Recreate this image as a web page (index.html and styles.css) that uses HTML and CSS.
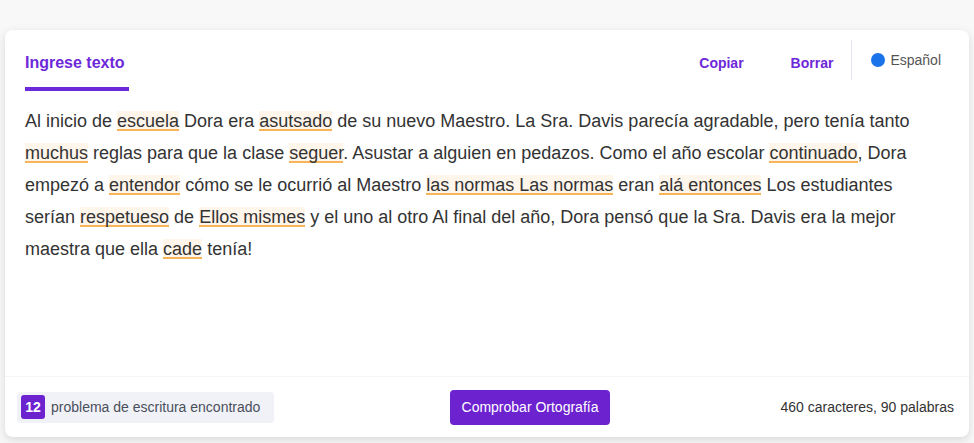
FILE: index.html
```html
<!DOCTYPE html>
<html lang="es">
<head>
<meta charset="utf-8">
<title>Corrector</title>
<link rel="stylesheet" href="styles.css">
</head>
<body>
<div class="card">
  <div class="header">
    <div class="tab">Ingrese texto</div>
    <div class="actions">
      <button class="link">Copiar</button>
      <button class="link">Borrar</button>
      <span class="divider"></span>
      <span class="lang"><span class="dot"></span>Español</span>
    </div>
  </div>
  <div class="text">Al inicio de <span class="err">escuela</span> Dora era <span class="err">asutsado</span> de su nuevo Maestro. La Sra. Davis parecía agradable, pero tenía tanto <span class="err">muchus</span> reglas para que la clase <span class="err">seguer</span>. Asustar a alguien en pedazos. Como el año escolar <span class="err">continuado</span>, Dora empezó a <span class="err">entendor</span> cómo se le ocurrió al Maestro <span class="err">las normas Las normas</span> eran <span class="err">alá entonces</span> Los estudiantes serían <span class="err">respetueso</span> de <span class="err">Ellos mismes</span> y el uno al otro Al final del año, Dora pensó que la Sra. Davis era la mejor maestra que ella <span class="err">cade</span> tenía!</div>
  <div class="footer">
    <div class="issues"><span class="count">12</span>problema de escritura encontrado</div>
    <button class="check">Comprobar Ortografía</button>
    <div class="stats">460 caracteres, 90 palabras</div>
  </div>
</div>
</body>
</html>
```

FILE: styles.css
```css
* { box-sizing: border-box; }
html, body { height: 100%; }
body {
  margin: 0;
  background: #f8f8f8;
  font-family: "Liberation Sans", Arial, sans-serif;
  padding: 30px 5px 6px 5px;
}
.card {
  height: 407px;
  background: #fff;
  border-radius: 8px;
  box-shadow: 0 3px 10px rgba(0,0,0,0.13);
  display: flex;
  flex-direction: column;
  width: 964px;
}
.header {
  display: flex;
  justify-content: space-between;
  align-items: flex-start;
  padding: 0 28px 0 20px;
}
.tab {
  margin-top: 24px;
  font-size: 16px;
  line-height: 18px;
  font-weight: bold;
  color: #6d28d9;
  padding-bottom: 15px;
  border-bottom: 4px solid #6d28d9;
  width: 104px;
}
.actions {
  display: flex;
  align-items: center;
  height: 40px;
  margin-top: 10px;
}
.link {
  background: none;
  border: none;
  padding: 5px 0 0 0;
  font-family: inherit;
  font-size: 14px;
  font-weight: bold;
  color: #6d28d9;
  cursor: pointer;
}
.link + .link { margin-left: 47px; }
.divider {
  width: 1px;
  height: 40px;
  background: #e3e6ec;
  margin: 0 19px 0 18px;
}
.lang {
  display: flex;
  align-items: center;
  font-size: 14px;
  color: #555;
  margin-top: -1px;
}
.dot {
  width: 14px;
  height: 14px;
  border-radius: 50%;
  background: #1a73e8;
  margin-right: 5px;
}
.text {
  flex: 1;
  padding: 14px 20px 0 20px;
  font-size: 18px;
  line-height: 32px;
  color: #333;
  width: 944px;
}
.err {
  background: #fef5eb;
  box-shadow: inset 0 -2px 0 #f8b458;
}
.footer {
  height: 61px;
  border-top: 1px solid #f3f4f8;
  display: grid;
  grid-template-columns: 433px 160px 1fr;
  align-items: center;
  padding: 0 15px 0 12px;
}
.issues {
  display: flex;
  align-items: center;
  background: #f1f2f7;
  border-radius: 4px;
  height: 31px;
  width: 257px;
  padding: 0 4px;
  font-size: 14px;
  color: #4a4f5c;
}
.count {
  display: inline-flex;
  align-items: center;
  justify-content: center;
  width: 24px;
  height: 24px;
  background: #6d22d0;
  color: #fff;
  font-weight: bold;
  border-radius: 3px;
  margin-right: 6px;
  font-size: 14px;
}
.check {
  width: 160px;
  height: 35px;
  background: #6d22d0;
  color: #fff;
  border: none;
  border-radius: 4px;
  font-family: inherit;
  font-size: 14px;
  cursor: pointer;
}
.stats {
  justify-self: end;
  font-size: 14px;
  color: #333;
}
```
